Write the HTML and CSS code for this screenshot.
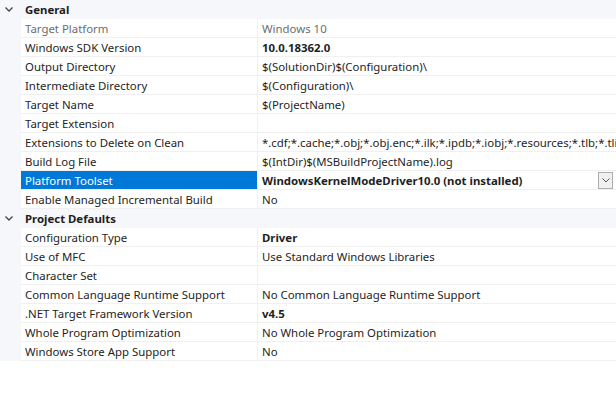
FILE: index.html
```html
<!DOCTYPE html>
<html lang="en">
    <head>
        <meta charset="UTF-8" />
        <title>Property Pages</title>
        <link rel="stylesheet" href="styles.css">
    </head>

    <body>
        <div class="grid">
            <div class="cat">
                <span class="arrow"><svg width="8" height="5" viewBox="0 0 8 5"><path d="M0.5 0.5 L4 4 L7.5 0.5" fill="none" stroke="#444" stroke-width="1.3"/></svg></span>
                <span class="cat-name">General</span>
            </div>
            <div class="row dim">
                <span class="gut"></span>
                <span class="name">Target Platform</span>
                <span class="val">Windows 10</span>
            </div>
            <div class="row">
                <span class="gut"></span>
                <span class="name">Windows SDK Version</span>
                <span class="val bold">10.0.18362.0</span>
            </div>
            <div class="row">
                <span class="gut"></span>
                <span class="name">Output Directory</span>
                <span class="val">$(SolutionDir)$(Configuration)\</span>
            </div>
            <div class="row">
                <span class="gut"></span>
                <span class="name">Intermediate Directory</span>
                <span class="val">$(Configuration)\</span>
            </div>
            <div class="row">
                <span class="gut"></span>
                <span class="name">Target Name</span>
                <span class="val">$(ProjectName)</span>
            </div>
            <div class="row">
                <span class="gut"></span>
                <span class="name">Target Extension</span>
                <span class="val"></span>
            </div>
            <div class="row">
                <span class="gut"></span>
                <span class="name">Extensions to Delete on Clean</span>
                <span class="val"><span class="clip">*.cdf;*.cache;*.obj;*.obj.enc;*.ilk;*.ipdb;*.iobj;*.resources;*.tlb;*.tli;*.t</span></span>
            </div>
            <div class="row">
                <span class="gut"></span>
                <span class="name">Build Log File</span>
                <span class="val">$(IntDir)$(MSBuildProjectName).log</span>
            </div>
            <div class="row sel">
                <span class="gut"></span>
                <span class="name">Platform Toolset</span>
                <span class="val bold">
                    <span class="txt">WindowsKernelModeDriver10.0 (not installed)</span>
                    <span class="drop"><svg width="8" height="5" viewBox="0 0 8 5"><path d="M0.5 0.5 L4 4 L7.5 0.5" fill="none" stroke="#555" stroke-width="1"/></svg></span>
                </span>
            </div>
            <div class="row">
                <span class="gut"></span>
                <span class="name">Enable Managed Incremental Build</span>
                <span class="val">No</span>
            </div>
            <div class="cat">
                <span class="arrow"><svg width="8" height="5" viewBox="0 0 8 5"><path d="M0.5 0.5 L4 4 L7.5 0.5" fill="none" stroke="#444" stroke-width="1.3"/></svg></span>
                <span class="cat-name">Project Defaults</span>
            </div>
            <div class="row">
                <span class="gut"></span>
                <span class="name">Configuration Type</span>
                <span class="val bold">Driver</span>
            </div>
            <div class="row">
                <span class="gut"></span>
                <span class="name">Use of MFC</span>
                <span class="val">Use Standard Windows Libraries</span>
            </div>
            <div class="row">
                <span class="gut"></span>
                <span class="name">Character Set</span>
                <span class="val"></span>
            </div>
            <div class="row">
                <span class="gut"></span>
                <span class="name">Common Language Runtime Support</span>
                <span class="val">No Common Language Runtime Support</span>
            </div>
            <div class="row">
                <span class="gut"></span>
                <span class="name">.NET Target Framework Version</span>
                <span class="val bold">v4.5</span>
            </div>
            <div class="row">
                <span class="gut"></span>
                <span class="name">Whole Program Optimization</span>
                <span class="val">No Whole Program Optimization</span>
            </div>
            <div class="row">
                <span class="gut"></span>
                <span class="name">Windows Store App Support</span>
                <span class="val">No</span>
            </div>
        </div>
    </body>
</html>
```

FILE: styles.css
```css
html,
body {
    margin: 0;
    padding: 0;
    overflow: hidden;
}

body {
    background: #fff;
    color: #1e1e1e;
    font: 11.4px/18px "Noto Sans", "Open Sans", sans-serif;
}

.grid {
    width: 616px;
}

/* category header */
.cat {
    display: flex;
    align-items: center;
    height: 19px;
    padding-top: 1px;
    box-sizing: border-box;
    background: #f5f7fa;
}

.arrow {
    width: 25px;
    display: flex;
    justify-content: center;
    padding-right: 7px;
    padding-bottom: 1px;
    box-sizing: border-box;
}

.cat-name {
    font-weight: bold;
}

/* property row */
.row {
    display: flex;
    height: 19px;
}

.gut {
    width: 21px;
    flex: none;
    background: #f5f7fa;
}

.name,
.val {
    height: 17px;
    padding-top: 1px;
    border-bottom: 1px solid #f0f0f0;
    white-space: nowrap;
    overflow: hidden;
}

.name {
    width: 232px;
    flex: none;
    padding-left: 4px;
    border-right: 1px solid #f0f0f0;
}

.val {
    flex: 1;
    min-width: 0;
    padding-left: 4px;
    display: flex;
    align-items: center;
}

.clip {
    overflow: hidden;
}

.bold {
    font-weight: bold;
}

.dim {
    color: #6d6d6d;
}

.sel .name {
    background: #0078d7;
    color: #fff;
}

.sel .txt {
    flex: 1;
}

.drop {
    width: 13px;
    height: 15px;
    margin-right: 3px;
    margin-top: -1px;
    border: 1px solid #adadad;
    background: #f0f0f0;
    display: flex;
    align-items: center;
    justify-content: center;
}
```
